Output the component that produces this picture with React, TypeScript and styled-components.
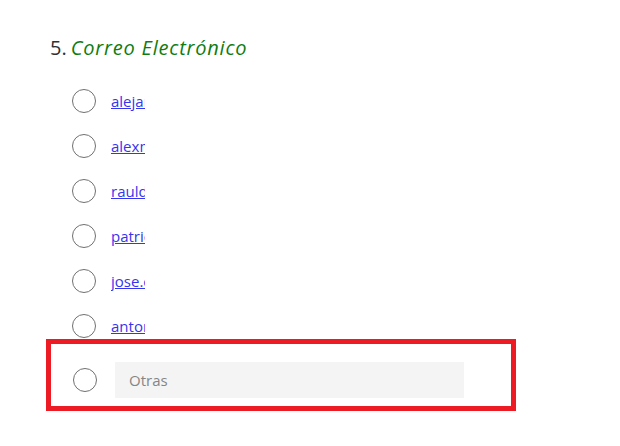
import React from "react";
import styled, { createGlobalStyle } from "styled-components";

const GlobalStyle = createGlobalStyle`
  body {
    margin: 0;
    background: #ffffff;
    font-family: "Open Sans", "Noto Sans", sans-serif;
  }
`;

const Page = styled.div`
  padding: 36px 0 0 46px;
  width: 470px;
`;

const Heading = styled.div`
  padding-left: 4px;
  font-size: 20px;
  line-height: 24px;
  color: #323130;
`;

const Title = styled.span`
  color: #107c10;
  font-style: italic;
  letter-spacing: 0.8px;
  margin-left: 4px;
`;

const Options = styled.div`
  display: flex;
  flex-direction: column;
  gap: 21px;
  margin-top: 29px;
  padding-left: 26px;
`;

const Option = styled.label`
  display: flex;
  align-items: center;
  height: 24px;
  gap: 15px;
`;

const Radio = styled.span`
  display: block;
  box-sizing: border-box;
  width: 24px;
  height: 24px;
  flex: none;
  border: 1px solid #707070;
  border-radius: 50%;
`;

const Mail = styled.a`
  display: block;
  width: 34px;
  overflow: hidden;
  white-space: nowrap;
  font-size: 15px;
  line-height: 20px;
  color: #3535ee;
  text-decoration: underline;
`;

const Highlight = styled.div`
  margin-top: 1px;
  border: 5px solid #ed1c24;
  padding: 18px 0 8px 22px;
`;

const OtherRow = styled.div`
  display: flex;
  align-items: center;
  gap: 18px;
  height: 36px;
`;

const OtherInput = styled.input`
  box-sizing: border-box;
  width: 349px;
  height: 36px;
  border: none;
  outline: none;
  background: #f4f4f4;
  padding: 0 14px;
  font-family: "Open Sans", "Noto Sans", sans-serif;
  font-size: 15px;
  color: #323130;

  &::placeholder {
    color: #858585;
  }
`;

const emails = [
  "alejandro.garcia@correo.com",
  "alexmartinez@correo.com",
  "rauldelgado@correo.com",
  "patricia.ruiz@correo.com",
  "jose.castro@correo.com",
  "antonio.lopez@correo.com",
];

export default function App() {
  return (
    <>
      <GlobalStyle />
      <Page>
        <Heading>
          5.<Title>Correo Electrónico</Title>
        </Heading>
        <Options>
          {emails.map((e) => (
            <Option key={e}>
              <Radio />
              <Mail href={`mailto:${e}`}>{e}</Mail>
            </Option>
          ))}
        </Options>
        <Highlight>
          <OtherRow>
            <Radio />
            <OtherInput placeholder="Otras" />
          </OtherRow>
        </Highlight>
      </Page>
    </>
  );
}
